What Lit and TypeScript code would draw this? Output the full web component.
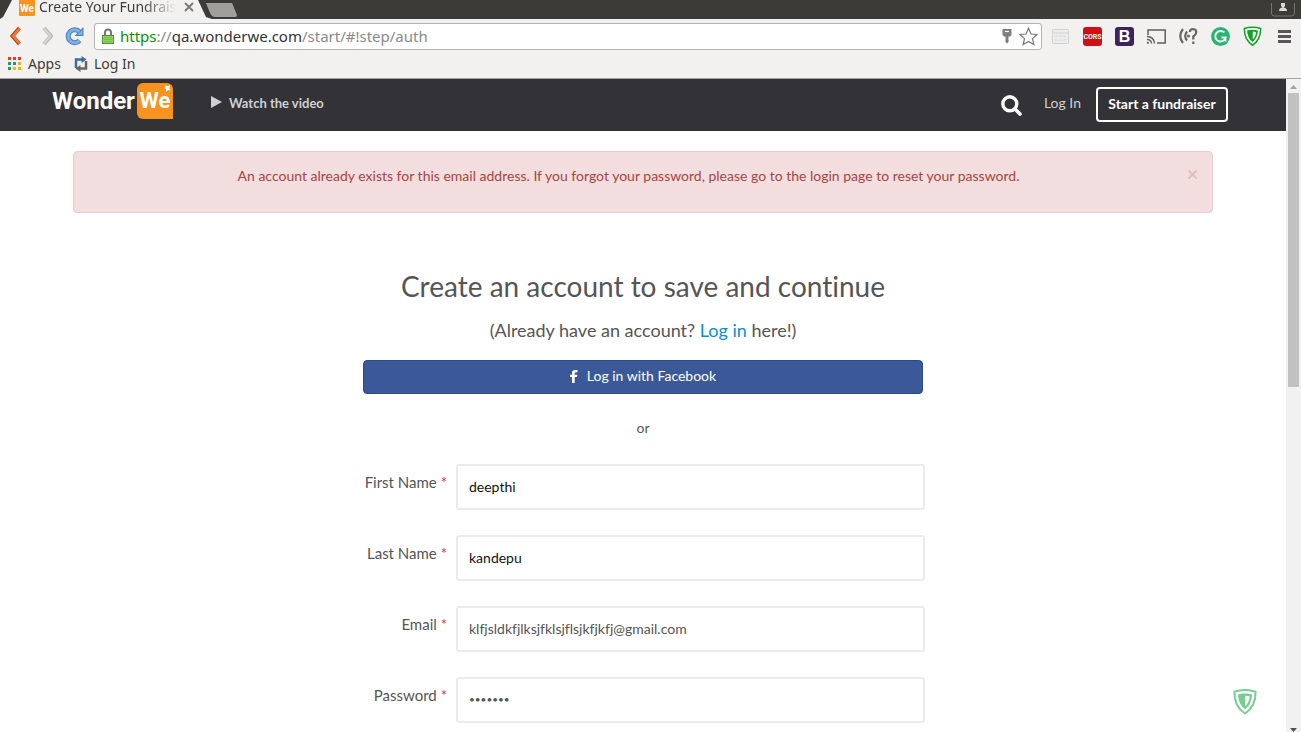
import { LitElement, html, css, svg } from "lit";
import { customElement, property } from "lit/decorators.js";

const shield = (color: string) => svg`
  <path d="M12 1.5 C15 1.5 19 2 22.6 3.2 C22.8 13 19 20.5 12 25 C5 20.5 1.2 13 1.4 3.2 C5 2 9 1.5 12 1.5Z" fill="#fff" stroke=${color} stroke-width="2"/>
  <path d="M12 5 C14.500 5 17 5.300 19 5.900 C18.800 12 16.500 17.500 12 20.800 C7.500 17.500 5.200 12 5 5.900 C7 5.300 9.500 5 12 5Z" fill=${color}/>
  <path d="M12.300 7.200 L16.600 7.700 C16.300 11.500 15 15 12.300 17.600Z" fill="#fff"/>`;

@customElement("browser-bar")
class BrowserBar extends LitElement {
  static styles = css`
    :host { display: block; flex: none; font-family: "Noto Sans", "Open Sans", sans-serif; color: #3c3c3c; background: #f2f1f0; border-bottom: 1px solid #a3a2a0; }
    svg { display: block; flex: none; }
    button { all: unset; display: block; flex: none; }
    a { color: inherit; text-decoration: none; }
    .strip { display: flex; height: 19px; background: #3c3b37; overflow: hidden; }
    .tab { display: flex; align-items: center; width: 212px; height: 19px; box-sizing: border-box; padding: 0 12px 5px 19px; background: #f2f1f0; clip-path: polygon(0 100%, 3px 17px, 12px 0, 198px 0, 206px 17px, 212px 100%); }
    .favicon { width: 16px; height: 17px; margin-right: 4px; }
    .tab-title { width: 137px; font-size: 14px; line-height: 18px; white-space: nowrap; overflow: hidden; -webkit-mask-image: linear-gradient(90deg, #000 76%, transparent); mask-image: linear-gradient(90deg, #000 76%, transparent); }
    .tab-close { margin-left: 8px; }
    .new-tab { width: 32px; height: 14px; margin-left: -6px; }
    .grow { flex: 1; }
    .user { width: 26px; height: 14px; margin-right: 5px; }
    .tools { display: flex; align-items: center; height: 34px; padding: 0 7px 0 9px; }
    .back { margin-right: 18px; }
    .forward { margin-right: 12px; }
    .reload { margin-right: 9px; }
    .address { display: flex; flex: 1; align-items: center; gap: 6px; height: 27px; box-sizing: border-box; padding: 0 3px 0 7px; border: 1px solid #b5b3b0; border-radius: 3px; background: #fff; }
    .url { flex: 1; font-size: 15px; line-height: 24px; color: #8a8a8a; white-space: nowrap; }
    .scheme { color: #0b8f0b; }
    .domain { color: #333; }
    .extensions { display: flex; align-items: center; gap: 13px; margin-left: 9px; }
    .bookmarks { display: flex; align-items: center; height: 25px; box-sizing: border-box; padding: 0 7px 4px 7px; font-size: 14px; line-height: 20px; }
    .bookmarks a { display: flex; align-items: center; gap: 6px; margin-right: 13px; }
  `;

  render() {
    const dots = ["#e8382f", "#e8382f", "#e8382f", "#1f9d58", "#2f7de1", "#f4b400", "#1f9d58", "#f4b400", "#f4b400"];
    return html`
      <div class="strip">
        <div class="tab">
          <svg class="favicon" viewBox="0 0 16 17"><rect width="16" height="17" rx="1" fill="#f7931e"/><text x="8" y="13" text-anchor="middle" font-family="Roboto, sans-serif" font-size="10" font-weight="700" fill="#fff">We</text></svg>
          <span class="tab-title">Create Your Fundrais</span>
          <button class="tab-close" aria-label="Close tab"><svg width="10" height="10" viewBox="0 0 10 10"><path d="M1 1L9 9M9 1L1 9" stroke="#777" stroke-width="1.800"/></svg></button>
        </div>
        <button aria-label="New tab"><svg class="new-tab" viewBox="0 0 32 14"><path d="M0 0H26L31 12Q31 14 28 14H9Q6 14 4 10Z" fill="#a19f9b"/></svg></button>
        <span class="grow"></span>
        <button aria-label="Profile"><svg class="user" viewBox="0 0 26 14"><path d="M1.500 0V10Q1.500 13 4.500 13H21.500Q24.500 13 24.500 10V0" fill="#3c3b37" stroke="#77756f"/><path d="M9 8Q9 5 12 4.500H14Q17 5 17 8Z M11 0H15V3L13 5L11 3Z" fill="#dcdad5"/></svg></button>
      </div>
      <div class="tools">
        <button class="back" aria-label="Back"><svg width="13" height="20" viewBox="0 0 13 20"><path d="M10.500 2L3.500 10L10.500 18" fill="none" stroke="#b84516" stroke-width="4"/><path d="M10.500 2.500L4 10L10.500 17.500" fill="none" stroke="#ee7a42" stroke-width="2.200"/></svg></button>
        <button class="forward" aria-label="Forward"><svg width="13" height="20" viewBox="0 0 13 20"><path d="M4 2L11 10L4 18" fill="none" stroke="#b9b7b4" stroke-width="4"/><path d="M4 2.500L10.500 10L4 17.500" fill="none" stroke="#d6d4d2" stroke-width="2.200"/></svg></button>
        <button class="reload" aria-label="Reload"><svg width="20" height="20" viewBox="0 0 20 20"><path d="M14.500 14.500A6.500 6.500 0 1 1 14.500 5.800" fill="none" stroke="#4a7fbe" stroke-width="5"/><path d="M18.500 1V10H9.500Z" fill="#4a7fbe"/><path d="M14.500 14.500A6.500 6.500 0 1 1 14.500 5.800" fill="none" stroke="#7eaee2" stroke-width="3"/><path d="M17.500 3.500V9H12Z" fill="#7eaee2"/></svg></button>
        <div class="address">
          <svg width="12" height="17" viewBox="0 0 12 17"><path d="M3 8V4.500A3 3 0 0 1 9 4.500V8" fill="none" stroke="#777" stroke-width="2"/><rect x=".5" y="7.500" width="11" height="8" fill="#8fd45f" stroke="#4f9434"/><path d="M2 9.500H10M2 11.500H10M2 13.500H10" stroke="#73bd4a"/></svg>
          <span class="url"><span class="scheme">https</span>://<span class="domain">qa.wonderwe.com</span>/start/#!step/auth</span>
          <svg width="12" height="16" viewBox="0 0 12 16"><path d="M1.500 1H10.500V7L9 8.500H7.500V14L6 15.500L4.500 14V8.500H3L1.500 7Z" fill="#7e7e7e"/><path d="M4 3.500H8" stroke="#fff" stroke-width="1.200"/></svg>
          <svg width="19" height="19" viewBox="0 0 19 19"><path d="M9.500 1.200L12 7L18 7.500L13.500 11.600L14.900 17.600L9.500 14.400L4.100 17.600L5.500 11.600L1 7.500L7 7Z" fill="#fff" stroke="#777" stroke-width="1.200"/></svg>
        </div>
        <div class="extensions">
          <svg width="19" height="19" viewBox="0 0 19 19"><rect x="1.500" y="2.500" width="16" height="14" rx="1" fill="#ededed" stroke="#d2d2d2"/><path d="M2 6H17" stroke="#d2d2d2"/><path d="M4 9H15M4 13H15" stroke="#d8d8d8" stroke-dasharray="3 1"/></svg>
          <svg width="19" height="19" viewBox="0 0 19 19"><rect width="19" height="19" rx="3" fill="#cf1016"/><text x="9.500" y="12" text-anchor="middle" font-family="Roboto, sans-serif" font-size="7" font-weight="700" fill="#fff">CORS</text></svg>
          <svg width="19" height="19" viewBox="0 0 19 19"><rect width="19" height="19" rx="3" fill="#3a2560"/><text x="9.500" y="15" text-anchor="middle" font-family="Liberation Sans, sans-serif" font-size="16" font-weight="700" fill="#fff">B</text></svg>
          <svg width="19" height="19" viewBox="0 0 19 19"><path d="M1 8V3H18.200V16H10" fill="none" stroke="#5e5e5e" stroke-width="1.500"/><path d="M0 9.500A7 7 0 0 1 7.500 16.500M0 12.500A4 4 0 0 1 4.500 16.500" fill="none" stroke="#5e5e5e" stroke-width="1.400"/><path d="M0 14.500A2 2 0 0 1 2 16.700H0Z" fill="#5e5e5e"/></svg>
          <svg width="19" height="19" viewBox="0 0 19 19"><path d="M4 2Q-1.500 9 4 16M8 4.500Q4.500 9 8 13.500" fill="none" stroke="#666" stroke-width="2.200"/><circle cx="9.500" cy="9" r="1.500" fill="#666"/><path d="M10.800 5Q11 2 14.300 2Q17.500 2.300 17.200 5.500Q17 7.500 14.300 9.500V12.500M14.300 14.500V17" fill="none" stroke="#666" stroke-width="2.200"/></svg>
          <svg width="19" height="19" viewBox="0 0 19 19"><circle cx="9.500" cy="9.500" r="9.400" fill="#26b575"/><path d="M13.300 5.500A5.300 5.300 0 1 0 14.700 10.500H10.500M14.500 10V14.500" fill="none" stroke="#fff" stroke-width="1.900"/></svg>
          <svg width="19" height="20" viewBox="0 0 24 26">${shield("#0ba51c")}</svg>
          <button aria-label="Menu"><svg width="19" height="19" viewBox="0 0 19 19"><path d="M3 4.500H16M3 9.500H16M3 14.500H16" stroke="#57565a" stroke-width="3"/></svg></button>
        </div>
      </div>
      <nav class="bookmarks">
        <a href="#apps"><svg width="15" height="15" viewBox="0 0 15 15">${dots.map((c, i) => svg`<rect x=${1 + (i % 3) * 5} y=${1 + Math.floor(i / 3) * 5} width="3" height="3" fill=${c}/>`)}</svg>Apps</a>
        <a href="#login"><svg width="14" height="16" viewBox="0 0 14 16"><path d="M2 12V3.500H8" fill="none" stroke="#3d6c9c" stroke-width="2.500"/><path d="M7.500 0L12.500 3.500L7.500 7Z" fill="#3d6c9c"/><path d="M12 5V12.500H6" fill="none" stroke="#68645f" stroke-width="2.500"/><path d="M6.500 9L1.500 12.500L6.500 16Z" fill="#68645f"/></svg>Log In</a>
      </nav>`;
  }
}

@customElement("site-header")
class SiteHeader extends LitElement {
  static styles = css`
    :host { display: flex; align-items: center; height: 52px; box-sizing: border-box; padding: 0 58px 0 52px; background: #333237; color: #d0d0d2; font-family: "Lato", sans-serif; font-size: 14px; line-height: 20px; }
    a { color: inherit; text-decoration: none; }
    svg { display: block; }
    .brand { display: flex; align-items: center; height: 36px; margin-bottom: 8px; color: #fff; font-family: "Roboto", sans-serif; font-size: 24px; font-weight: 700; line-height: 36px; }
    .word { width: 85px; }
    .we { position: relative; width: 36px; height: 36px; background: #f7931e; border-radius: 6px 6px 0 6px; font-size: 22px; text-align: center; }
    .spark { position: absolute; right: 2px; top: 2px; }
    .video { display: flex; align-items: center; gap: 7px; margin: 0 auto 4px 38px; font-size: 13px; font-weight: 700; }
    .video svg { margin-bottom: 3px; }
    .search { all: unset; margin-right: 22px; }
    .login { margin: 0 15px 4px 0; }
    .start { box-sizing: border-box; width: 132px; height: 35px; margin-bottom: 2px; border: 2px solid #fff; border-radius: 4px; background: none; color: #fff; padding: 0; font: inherit; font-weight: 700; }
  `;

  render() {
    return html`
      <a class="brand" href="#home"><span class="word">Wonder</span><span class="we">We<svg class="spark" width="7" height="7" viewBox="0 0 8 8"><path d="M1 0L4 1.500L7 0L6 4L8 6L4.500 6L2 8L2.500 4.500L0 3L2 2.500Z" fill="#fff"/></svg></span></a>
      <a class="video" href="#video"><svg width="11" height="12" viewBox="0 0 11 12"><path d="M0 0L11 6L0 12Z" fill="#d0d0d2"/></svg>Watch the video</a>
      <button class="search" aria-label="Search"><svg width="21" height="21" viewBox="0 0 21 21"><circle cx="8.800" cy="8.800" r="7" fill="none" stroke="#fff" stroke-width="3.400"/><path d="M14 14L19 19" stroke="#fff" stroke-width="3.600" stroke-linecap="round"/></svg></button>
      <a class="login" href="#login">Log In</a>
      <button class="start">Start a fundraiser</button>`;
  }
}

@customElement("form-field")
class FormField extends LitElement {
  @property() label = "";
  @property() value = "";
  @property() type = "text";
  @property({ type: Boolean, reflect: true }) strong = false;

  static styles = css`
    :host { display: grid; grid-template-columns: 84px 1fr; column-gap: 9px; align-items: center; font-family: "Lato", sans-serif; font-variant-ligatures: none; }
    label { color: #555; font-size: 15px; line-height: 20px; padding-bottom: 10px; text-align: right; white-space: nowrap; }
    .required { color: #d9303e; }
    input { box-sizing: border-box; width: 100%; height: 46px; padding: 0 11px 2px; border: 2px solid #ebebeb; border-radius: 3px; background: #fff; color: #555; font-family: inherit; font-size: 14px; font-variant-ligatures: none; outline: none; }
    input[type="password"] { font-size: 10px; }
    :host([strong]) input { color: #111; }
  `;

  render() {
    return html`
      <label for="control">${this.label} <span class="required">*</span></label>
      <input id="control" type=${this.type} .value=${this.value} />`;
  }
}

@customElement("app-root")
class AppRoot extends LitElement {
  static styles = css`
    :host { display: flex; flex-direction: column; height: 100vh; overflow: hidden; background: #fff; color: #555; font-family: "Lato", sans-serif; font-size: 14px; line-height: 20px; font-variant-ligatures: none; }
    .viewport { display: flex; flex: 1; min-height: 0; }
    .page { position: relative; flex: 1; min-width: 0; overflow: hidden; }
    .content { max-width: 1140px; margin: 20px auto 0; }
    .alert { display: flex; box-sizing: border-box; height: 62px; padding: 14px 15px; border: 1px solid #ebccd1; border-radius: 4px; background: #f2dede; color: #a94442; }
    .message { flex: 1; margin: 0; text-align: center; padding-right: 20px; }
    .close { all: unset; width: 9px; height: 16px; display: grid; place-items: center; }
    .signup { max-width: 560px; margin: 55px auto 0; text-align: center; }
    h1 { margin: 0; font-size: 28px; line-height: 36px; font-weight: 400; }
    .already { margin: 16px 0 20px; font-size: 18px; line-height: 20px; }
    .already a { color: #0a8fd4; text-decoration: none; }
    .facebook { display: flex; align-items: center; justify-content: center; gap: 9px; width: 100%; height: 34px; padding: 0 0 2px; border: 1px solid #2d4a86; border-radius: 4px; background: #3b5998; color: #fff; font: inherit; }
    .or { margin: 24px 0 26px; }
    .fields { display: grid; gap: 25px; margin-right: -2px; }
    .badge { position: absolute; right: 29px; bottom: 17px; opacity: 0.55; }
    .scrollbar { display: flex; flex-direction: column; align-items: center; width: 15px; background: #f1f1f1; }
    .arrow { display: block; padding: 6px 0 4px; }
    .thumb { width: 11px; height: 45%; flex: none; background: #c1c1c1; }
    .down { margin-top: auto; padding: 0; }
  `;

  render() {
    return html`
      <browser-bar></browser-bar>
      <div class="viewport">
        <div class="page">
          <site-header></site-header>
          <main class="content">
            <div class="alert" role="alert">
              <p class="message">An account already exists for this email address. If you forgot your password, please go to the login page to reset your password.</p>
              <button class="close" aria-label="Dismiss"><svg width="9" height="9" viewBox="0 0 9 9"><path d="M.5 .5L8.500 8.500M8.500 .5L.5 8.500" stroke="#e1bdbd" stroke-width="2"/></svg></button>
            </div>
            <section class="signup">
              <h1>Create an account to save and continue</h1>
              <p class="already">(Already have an account? <a href="#login">Log in</a> here!)</p>
              <button class="facebook"><svg width="8" height="13" viewBox="0 0 8 13"><path d="M2 13V7H0V4.800H2V3.200Q2 0 5 0H7.500V2.300H6Q4.700 2.300 4.700 3.500V4.800H7.400L7 7H4.700V13Z" fill="#fff"/></svg>Log in with Facebook</button>
              <p class="or">or</p>
              <div class="fields">
                <form-field label="First Name" value="deepthi" strong></form-field>
                <form-field label="Last Name" value="kandepu" strong></form-field>
                <form-field label="Email" type="email" value="klfjsldkfjlksjfklsjflsjkfjkfj@gmail.com"></form-field>
                <form-field label="Password" type="password" value="abcdefg"></form-field>
              </div>
            </section>
          </main>
          <svg class="badge" width="24" height="27" viewBox="0 0 24 26">${shield("#0ba53c")}</svg>
        </div>
        <div class="scrollbar" aria-hidden="true">
          <svg class="arrow" width="7" height="4" viewBox="0 0 7 4"><path d="M0 4L3.500 0L7 4Z" fill="#a3a3a3"/></svg>
          <span class="thumb"></span>
          <svg class="arrow down" width="7" height="4" viewBox="0 0 7 4"><path d="M0 0L3.500 4L7 0Z" fill="#505050"/></svg>
        </div>
      </div>`;
  }
}
